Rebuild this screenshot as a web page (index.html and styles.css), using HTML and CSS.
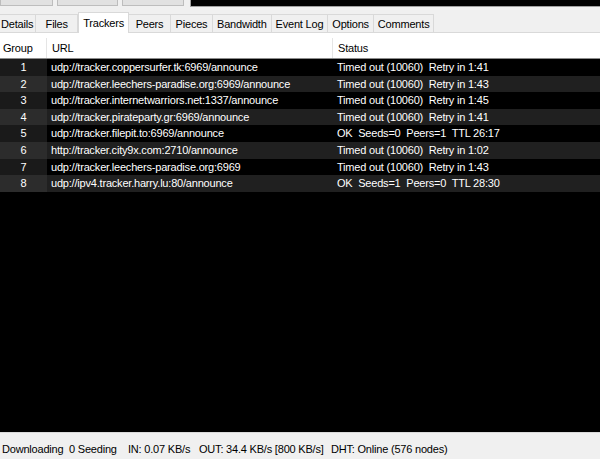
FILE: index.html
```html
<!DOCTYPE html>
<html lang="en">
<head>
    <meta charset="UTF-8">
    <title>Torrent Trackers</title>
    <link rel="stylesheet" href="styles.css">
</head>
<body>
    <div class="toolbar">
        <div class="tool-button btn-1"></div>
        <div class="tool-button btn-2"></div>
        <div class="tool-button btn-3"></div>
        <div class="graph-box"></div>
    </div>

    <div class="tabs">
        <div class="tab tab-first">Details</div>
        <div class="tab">Files</div>
        <div class="tab active">Trackers</div>
        <div class="tab">Peers</div>
        <div class="tab">Pieces</div>
        <div class="tab">Bandwidth</div>
        <div class="tab">Event Log</div>
        <div class="tab">Options</div>
        <div class="tab">Comments</div>
    </div>

    <div class="panel">
        <div class="list-header">
            <div class="col col-group">Group</div>
            <div class="col col-url">URL</div>
            <div class="col col-status">Status</div>
        </div>
        <div class="list-body" id="trackerList"></div>
    </div>

    <div class="statusbar">
        <span class="pane pane-dl">Downloading</span>
        <span class="pane pane-seed">0 Seeding</span>
        <span class="pane pane-in">IN: 0.07 KB/s</span>
        <span class="pane pane-out">OUT: 34.4 KB/s [800 KB/s]</span>
        <span class="pane">DHT: Online (576 nodes)</span>
    </div>

    <script>
        // tracker list
        const trackers = [
            [1, "udp://tracker.coppersurfer.tk:6969/announce", "Timed out (10060)  Retry in 1:41"],
            [2, "udp://tracker.leechers-paradise.org:6969/announce", "Timed out (10060)  Retry in 1:43"],
            [3, "udp://tracker.internetwarriors.net:1337/announce", "Timed out (10060)  Retry in 1:45"],
            [4, "udp://tracker.pirateparty.gr:6969/announce", "Timed out (10060)  Retry in 1:41"],
            [5, "udp://tracker.filepit.to:6969/announce", "OK  Seeds=0  Peers=1  TTL 26:17"],
            [6, "http://tracker.city9x.com:2710/announce", "Timed out (10060)  Retry in 1:02"],
            [7, "udp://tracker.leechers-paradise.org:6969", "Timed out (10060)  Retry in 1:43"],
            [8, "udp://ipv4.tracker.harry.lu:80/announce", "OK  Seeds=1  Peers=0  TTL 28:30"]
        ];

        const list = document.getElementById("trackerList");
        trackers.forEach(function (t) {
            const row = document.createElement("div");
            row.className = "row";
            row.innerHTML =
                '<div class="col col-group">' + t[0] + '</div>' +
                '<div class="col col-url">' + t[1] + '</div>' +
                '<div class="col col-status">' + t[2] + '</div>';
            list.appendChild(row);
        });
    </script>
</body>
</html>
```

FILE: styles.css
```css
html, body {
    height: 100%;
}
body {
    margin: 0;
    background-color: #f0f0f0;
    color: #000;
    font-family: "Liberation Sans", Arial, sans-serif;
    font-size: 11px;
    letter-spacing: -0.2px;
    display: flex;
    flex-direction: column;
    overflow: hidden;
}

/* top toolbar, cut off by the window */
.toolbar {
    display: flex;
    height: 7px;
    flex-shrink: 0;
}
.tool-button {
    background-color: #e1e1e1;
    border: 1px solid #bdbdbd;
    border-top: none;
    box-sizing: border-box;
    height: 6px;
}
.btn-1 { width: 53px; }
.btn-2 { width: 61px; margin-left: 4px; }
.btn-3 { width: 62px; margin-left: 4px; }
.graph-box {
    flex: 1;
    margin-left: 6px;
    background-color: #000;
    border: 1px solid #a0a0a0;
    border-top: none;
    border-right: none;
    height: 7px;
    box-sizing: border-box;
}

/* tab strip */
.tabs {
    display: flex;
    align-items: flex-end;
    height: 26px;
    flex-shrink: 0;
    border-bottom: 1px solid #d9d9d9;
    box-sizing: border-box;
}
.tab {
    height: 18px;
    line-height: 18px;
    min-width: 42px;
    padding: 0 4px;
    text-align: center;
    border: 1px solid #d9d9d9;
    border-bottom: none;
    border-left: none;
    background-color: #f0f0f0;
    box-sizing: border-box;
    white-space: nowrap;
}
.tab-first {
    margin-left: -4px;
    padding: 0 2px 0 5px;
    min-width: 0;
}
.tab.active {
    height: 21px;
    line-height: 20px;
    background-color: #fff;
    border-left: 1px solid #d9d9d9;
    margin-bottom: -1px;
}

/* tracker list */
.panel {
    flex: 1;
    display: flex;
    flex-direction: column;
    background-color: #000;
    border-top: 5px solid #fff;
    min-height: 0;
}
.list-header {
    display: flex;
    height: 21px;
    background-color: #fff;
    border-bottom: 1px solid #8c8c8c;
    box-sizing: border-box;
}
.list-header .col {
    line-height: 21px;
    border-right: 1px solid #e5e5e5;
    padding-left: 3px;
}
.col {
    box-sizing: border-box;
    white-space: pre;
    overflow: hidden;
}
.col-group {
    width: 47px;
}
.col-url {
    width: 286px;
    padding-left: 4px;
}
.col-status {
    flex: 1;
    padding-left: 4px;
}
.list-header .col-url,
.list-header .col-status {
    padding-left: 5px;
}
.list-header .col-status {
    border-right: none;
}

.row {
    display: flex;
    height: 16.6px;
    line-height: 17px;
    color: #fff;
    background-color: #000;
}
.row:nth-child(even) {
    background-color: #202020;
}
.row .col-group {
    text-align: center;
    background-color: #1a1a1a;
}
.row:nth-child(even) .col-group {
    background-color: #2c2c2c;
}

/* bottom status bar */
.statusbar {
    display: flex;
    height: 27px;
    flex-shrink: 0;
    align-items: center;
    padding-top: 6px;
    box-sizing: border-box;
    border-top: 1px solid #dadada;
    padding-left: 2px;
    white-space: pre;
}
.pane-dl { width: 67px; }
.pane-seed { width: 59px; }
.pane-in { width: 71px; }
.pane-out { width: 132px; }
```
